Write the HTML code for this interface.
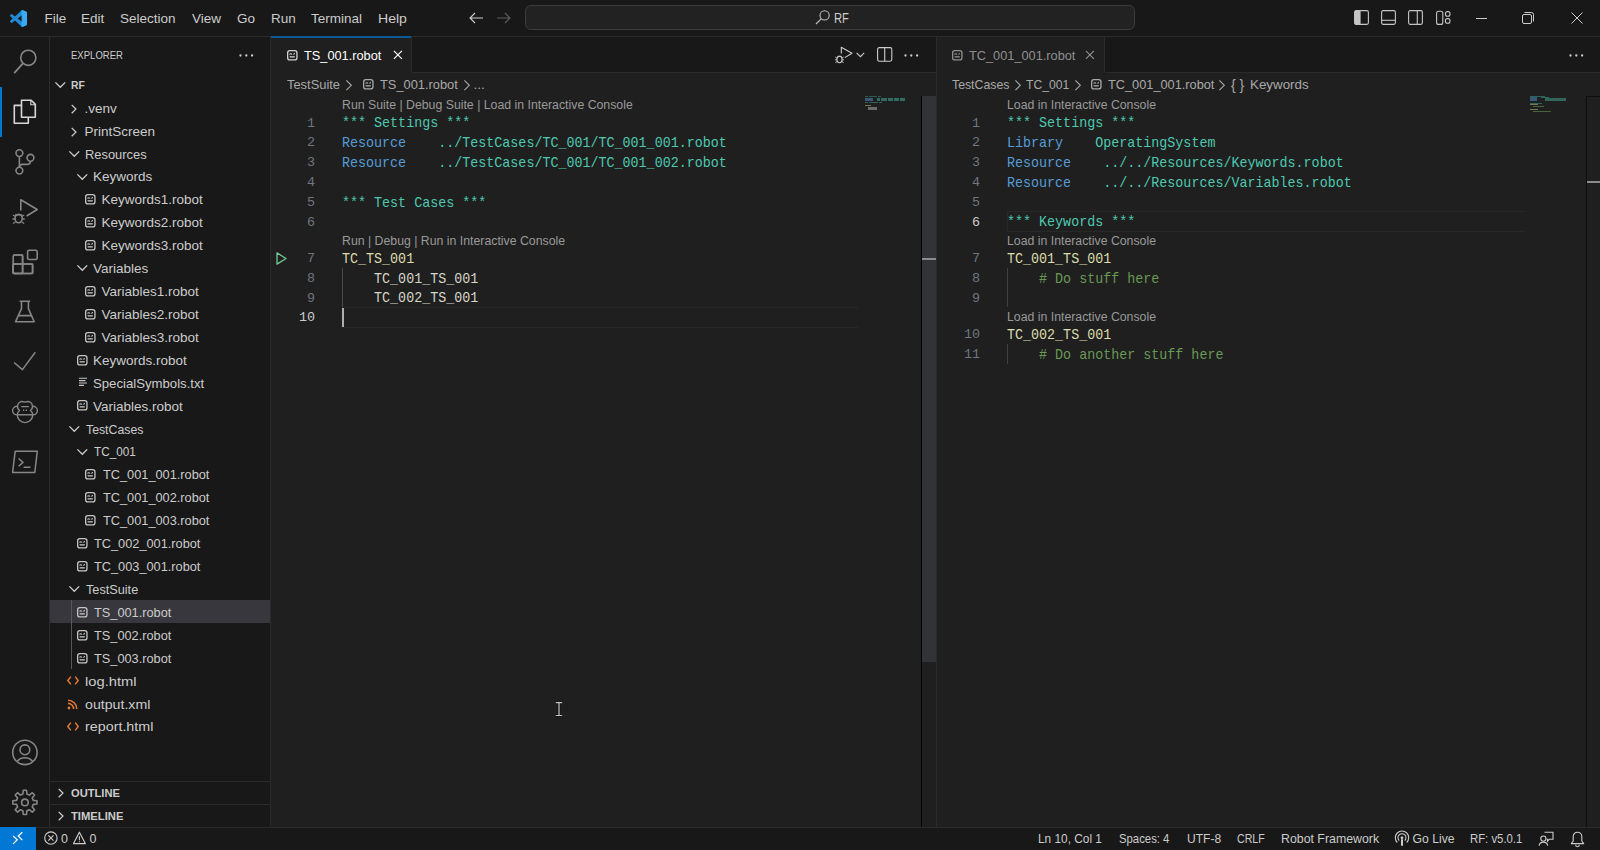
<!DOCTYPE html>
<html><head><meta charset="utf-8">
<style>
*{margin:0;padding:0;box-sizing:border-box}
html,body{width:1600px;height:850px;overflow:hidden;background:#181818}
body{position:relative;font-family:"Liberation Sans",sans-serif;color:#cccccc;font-size:13.5px}
.a{position:absolute}
.t{position:absolute;white-space:pre;line-height:1}
svg{position:absolute;overflow:visible}
.mono{font-family:"Liberation Mono",monospace}
/* rows */
.row{position:absolute;left:50px;width:220px;height:22.917px;line-height:22.917px;white-space:pre;font-size:13.5px;color:#cccccc}
.row span{position:absolute;top:0}
.ln{position:absolute;width:40px;text-align:right;font-family:"Liberation Mono",monospace;font-size:13.37px;color:#6e7681;line-height:19.79px;height:19.79px}
.cl{position:absolute;white-space:pre;font-family:"Liberation Mono",monospace;font-size:14.2px;line-height:19.79px;height:19.79px;color:#cccccc;transform:scaleX(.9415);transform-origin:0 0}
.lens{position:absolute;white-space:pre;font-size:12.5px;color:#999999;line-height:16.67px;height:16.67px}
</style></head>
<body>
<!-- ============ TITLE BAR ============ -->
<div class="a" style="left:0;top:0;width:1600px;height:36px;background:#181818"></div>

<svg style="left:10px;top:10px" width="17" height="17" viewBox="0 0 100 100"><path fill="#2289d6" d="M96.46 10.8L75.86.87a6.23 6.23 0 0 0-7.1 1.2L29.33 38.05 12.15 25a4.16 4.16 0 0 0-5.32.24L1.34 30.23a4.17 4.17 0 0 0 0 6.16L16.24 50 1.33 63.61a4.17 4.17 0 0 0 0 6.16l5.5 4.99a4.16 4.16 0 0 0 5.32.24l17.18-13.04 39.43 35.97a6.23 6.23 0 0 0 7.1 1.2l20.6-9.92A6.25 6.25 0 0 0 100 83.6V16.4a6.25 6.25 0 0 0-3.54-5.63zM75.01 72.7L45.1 50l29.91-22.7z"/><path fill="#3cb2fa" opacity=".85" d="M96.46 10.8L75.86.87a6.23 6.23 0 0 0-7.1 1.2L68 3v94l.76.73a6.23 6.23 0 0 0 7.1 1.2l20.6-9.92A6.25 6.25 0 0 0 100 83.6V16.4a6.25 6.25 0 0 0-3.54-5.63z"/></svg>
<div class="t" style="left:44.5px;top:12px">File</div>
<div class="t" style="left:81px;top:12px">Edit</div>
<div class="t" style="left:120px;top:12px">Selection</div>
<div class="t" style="left:192px;top:12px">View</div>
<div class="t" style="left:237px;top:12px">Go</div>
<div class="t" style="left:271px;top:12px">Run</div>
<div class="t" style="left:311px;top:12px">Terminal</div>
<div class="t" style="left:377.5px;top:12px;transform:scaleX(1.04);transform-origin:0 0">Help</div>
<!-- nav arrows -->
<svg style="left:469px;top:12px" width="14" height="12" viewBox="0 0 14 12"><path d="M6 1L1 6l5 5M1 6h13" fill="none" stroke="#cccccc" stroke-width="1.1"/></svg>
<svg style="left:497px;top:12px" width="14" height="12" viewBox="0 0 14 12"><path d="M8 1l5 5-5 5M0 6h13" fill="none" stroke="#5f5f5f" stroke-width="1.1"/></svg>
<!-- command center -->
<div class="a" style="left:525px;top:5px;width:610px;height:25px;border:1px solid #3c3c3c;border-radius:6px;background:#222222"></div>
<svg style="left:815px;top:10px" width="15" height="15" viewBox="0 0 15 15"><circle cx="9.6" cy="5.4" r="4.6" fill="none" stroke="#bdbdbd" stroke-width="1.1"/><path d="M6.4 8.6L1 14" stroke="#bdbdbd" stroke-width="1.2"/></svg>
<div class="t" style="left:834px;top:11.3px;font-size:14px;color:#cccccc;transform:scaleX(.8);transform-origin:0 0">RF</div>
<!-- layout icons -->
<svg style="left:1354px;top:10px" width="15" height="15" viewBox="0 0 15 15"><rect x=".6" y=".6" width="13.8" height="13.8" rx="1.6" fill="none" stroke="#c5c5c5" stroke-width="1.1"/><rect x=".6" y=".6" width="6" height="13.8" rx="1.2" fill="#c5c5c5"/></svg>
<svg style="left:1381px;top:10px" width="15" height="15" viewBox="0 0 15 15"><rect x=".6" y=".6" width="13.8" height="13.8" rx="1.6" fill="none" stroke="#c5c5c5" stroke-width="1.1"/><path d="M.6 10.3h13.8" stroke="#c5c5c5" stroke-width="1.1"/></svg>
<svg style="left:1408px;top:10px" width="15" height="15" viewBox="0 0 15 15"><rect x=".6" y=".6" width="13.8" height="13.8" rx="1.6" fill="none" stroke="#c5c5c5" stroke-width="1.1"/><path d="M9.3 .6v13.8" stroke="#c5c5c5" stroke-width="1.1"/></svg>
<svg style="left:1436px;top:10px" width="15" height="15" viewBox="0 0 15 15"><rect x=".6" y="1.2" width="6.2" height="13.2" rx="2" fill="none" stroke="#c5c5c5" stroke-width="1.1"/><rect x="9.4" y="1.6" width="4.6" height="4.6" rx="2" fill="none" stroke="#c5c5c5" stroke-width="1.1"/><rect x="9.4" y="8.6" width="4.6" height="4.6" rx="2" fill="none" stroke="#c5c5c5" stroke-width="1.1"/></svg>
<!-- window controls -->
<div class="a" style="left:1476px;top:17.5px;width:11px;height:1px;background:#cccccc"></div>
<svg style="left:1522px;top:12px" width="12" height="12" viewBox="0 0 12 12"><rect x=".5" y="2.5" width="9" height="9" rx="1.5" fill="none" stroke="#cccccc" stroke-width="1"/><path d="M2.5 .5h7a2 2 0 0 1 2 2v7" fill="none" stroke="#cccccc" stroke-width="1"/></svg>
<svg style="left:1571px;top:12px" width="12" height="12" viewBox="0 0 12 12"><path d="M.5 .5l11 11M11.5 .5l-11 11" stroke="#cccccc" stroke-width="1"/></svg>

<!-- ============ ACTIVITY BAR ============ -->
<div class="a" style="left:49px;top:36px;width:1px;height:791px;background:#2b2b2b"></div>
<div class="a" style="left:0;top:86.5px;width:2px;height:50px;background:#0078d4"></div>
<svg style="left:0;top:0" width="50" height="850" viewBox="0 0 50 850">
<g fill="none" stroke="#868686" stroke-width="1.6" stroke-linejoin="round">
<circle cx="28.3" cy="57.8" r="7.6"/><path d="M22.9 63.3L14.2 73.2" stroke-width="1.8"/>
</g>
<g fill="none" stroke="#d7d7d7" stroke-width="1.6" stroke-linejoin="round">
<path d="M21.5 105.4H14.3V123.3H28.3V117.2"/>
<path d="M21.5 100.2H31.2L35.3 104.4V117.2H21.5Z"/><path d="M30.8 100.4V104.8H35.1" stroke-width="1.1"/>
</g>
<g fill="none" stroke="#868686" stroke-width="1.6" stroke-linejoin="round">
<circle cx="19.4" cy="153.1" r="3.4"/><circle cx="19.4" cy="170.6" r="3.4"/><circle cx="30.5" cy="157.8" r="3.4"/>
<path d="M19.4 156.5V167.2"/><path d="M30.5 161.2Q30.5 164.4 26.8 164.4H22.6Q19.4 164.4 19.4 167.2"/>
<path d="M20.8 210.5V199.8L37.2 209.5L26.6 216"/>
<ellipse cx="18.6" cy="218.6" rx="3.6" ry="4.2"/><path d="M13 215l2.5 1.5M24.2 215l-2.5 1.5M12.5 219h2.5M24.7 219h-2.5M13 223.5l2.5-1.5M24.2 223.5l-2.5-1.5M15 214.8h7.2" stroke-width="1.3"/>
<path d="M13.2 264H32.6V273.5H13.2ZM13.2 255H22.6V273.5M22.6 264V273.5" stroke-linejoin="round"/>
<rect x="13.2" y="255" width="9.4" height="18.5" rx="1.6"/><rect x="13.2" y="264" width="19.4" height="9.5" rx="1.6"/>
<rect x="27.6" y="250.3" width="9.6" height="9.2" rx="1.6"/>
<path d="M19.6 301.3H30.2M21.5 301.3V308.6L15.6 321.7H34.2L28.4 308.6V301.3M17.8 315.6H32"/>
<path d="M14.1 362.5L22.4 369.6L35.3 352.2" stroke-width="1.5"/>
<path d="M19.6 410.5C17.7 409.2 17.3 407.5 17.6 405.5C18.1 402.6 20.8 401.1 23 401.7C24.2 402.1 25.8 402.1 27 401.7C29.2 401.1 31.9 402.6 32.4 405.5C32.7 407.5 32.3 409.2 30.4 410.5C32 411.6 32.8 413 32.8 414.8A7.8 7.8 0 0 1 17.2 414.8C17.2 413 18 411.6 19.6 410.5Z" stroke-width="1.4"/><path d="M17.4 406.3A4.8 4.3 0 0 0 17.4 414.9M32.6 406.3A4.8 4.3 0 0 1 32.6 414.9M17.2 414.8H32.8" stroke-width="1.4"/><path d="M21.2 406.6H28.8" stroke-width="1.3"/><path d="M23.6 409.4v1.6M26.4 409.4v1.6" stroke-width="1.3"/>
<path d="M15.2 451.2H37.3L34.8 472.4H12.6Z" stroke-width="1.5"/><path d="M18.6 458.5L23 462.4L18.6 466.3M23.6 467.2H30.5" stroke-width="1.5"/>
<circle cx="24.9" cy="752.4" r="12.2"/><circle cx="24.9" cy="749.8" r="4.9"/><path d="M17.3 761.4A8.6 7 0 0 1 32.5 761.4"/>
<path d="M36.99 800.78 L36.99 804.02 L33.26 804.41 L32.23 806.89 L34.60 809.80 L32.30 812.10 L29.39 809.73 L26.91 810.76 L26.52 814.49 L23.28 814.49 L22.89 810.76 L20.41 809.73 L17.50 812.10 L15.20 809.80 L17.57 806.89 L16.54 804.41 L12.81 804.02 L12.81 800.78 L16.54 800.39 L17.57 797.91 L15.20 795.00 L17.50 792.70 L20.41 795.07 L22.89 794.04 L23.28 790.31 L26.52 790.31 L26.91 794.04 L29.39 795.07 L32.30 792.70 L34.60 795.00 L32.23 797.91 L33.26 800.39Z"/><circle cx="24.9" cy="802.4" r="3.3"/>
</g>
</svg>
<!-- ============ EDITOR 1 ============ -->
<div class="a" style="left:271px;top:36px;width:665px;height:791px;background:#1f1f1f"></div>
<div class="a" style="left:271px;top:36px;width:665px;height:36px;background:#181818"></div>
<div class="a" style="left:412px;top:72px;width:524px;height:1px;background:#2b2b2b"></div>
<div class="a" style="left:271px;top:36px;width:141px;height:37px;background:#1f1f1f"></div>
<div class="a" style="left:411px;top:36px;width:1px;height:36px;background:#2b2b2b"></div>
<div class="a" style="left:271px;top:36px;width:140px;height:2px;background:#0d5b96"></div>
<svg style="left:287.00px;top:49.60px" width="11" height="11" viewBox="0 0 11 11"><rect x=".65" y=".65" width="9.3" height="9.2" rx="2.2" fill="none" stroke="#d0d0d0" stroke-width="1.3"/><path d="M2.6 4.6a1.2 1.2 0 0 1 2.3 0M6.5 4.6l1.2-1.4" fill="none" stroke="#d0d0d0" stroke-width="1.1"/><rect x="2.6" y="6.2" width="5.2" height="1.3" fill="#d0d0d0"/></svg>
<div class="t" style="left:304px;top:48.77px;color:#ffffff;transform:scaleX(0.945);transform-origin:0 0">TS_001.robot</div>
<svg style="left:392.5px;top:50.2px" width="10" height="10" viewBox="0 0 10 10"><path d="M.9 .9l8 8M8.9 .9l-8 8" stroke="#ffffff" stroke-width="1.15"/></svg>
<div class="t" style="left:287px;top:78.2px;color:#a9a9a9;transform:scaleX(.955);transform-origin:0 0">TestSuite</div>
<svg style="left:346.30px;top:79.70px" width="6" height="11" viewBox="0 0 6 11"><path d="M.4 .4L5.3 5.3L.4 10.2" fill="none" stroke="#a9a9a9" stroke-width="1.1"/></svg>
<svg style="left:363.20px;top:79.20px" width="11" height="11" viewBox="0 0 11 11"><rect x=".65" y=".65" width="9.3" height="9.2" rx="2.2" fill="none" stroke="#a9a9a9" stroke-width="1.3"/><path d="M2.6 4.6a1.2 1.2 0 0 1 2.3 0M6.5 4.6l1.2-1.4" fill="none" stroke="#a9a9a9" stroke-width="1.1"/><rect x="2.6" y="6.2" width="5.2" height="1.3" fill="#a9a9a9"/></svg>
<div class="t" style="left:379.5px;top:78.2px;color:#a9a9a9;transform:scaleX(.95);transform-origin:0 0">TS_001.robot</div>
<svg style="left:463.80px;top:79.70px" width="6" height="11" viewBox="0 0 6 11"><path d="M.4 .4L5.3 5.3L.4 10.2" fill="none" stroke="#a9a9a9" stroke-width="1.1"/></svg>
<div class="t" style="left:473.5px;top:78.2px;color:#a9a9a9">...</div>
<div class="a" style="left:936px;top:36px;width:664px;height:791px;background:#1f1f1f"></div>
<div class="a" style="left:936px;top:36px;width:664px;height:36px;background:#181818"></div>
<div class="a" style="left:1105px;top:72px;width:495px;height:1px;background:#2b2b2b"></div>
<div class="a" style="left:936px;top:36px;width:169px;height:37px;background:#1f1f1f"></div>
<div class="a" style="left:1104px;top:36px;width:1px;height:36px;background:#2b2b2b"></div>
<svg style="left:952.00px;top:49.60px" width="11" height="11" viewBox="0 0 11 11"><rect x=".65" y=".65" width="9.3" height="9.2" rx="2.2" fill="none" stroke="#8f8f8f" stroke-width="1.3"/><path d="M2.6 4.6a1.2 1.2 0 0 1 2.3 0M6.5 4.6l1.2-1.4" fill="none" stroke="#8f8f8f" stroke-width="1.1"/><rect x="2.6" y="6.2" width="5.2" height="1.3" fill="#8f8f8f"/></svg>
<div class="t" style="left:968.5px;top:48.77px;color:#8f8f8f;transform:scaleX(.945);transform-origin:0 0">TC_001_001.robot</div>
<svg style="left:1084.5px;top:50.2px" width="10" height="10" viewBox="0 0 10 10"><path d="M.9 .9l8 8M8.9 .9l-8 8" stroke="#8f8f8f" stroke-width="1.15"/></svg>
<div class="t" style="left:951.5px;top:78.2px;color:#a9a9a9;transform:scaleX(.91);transform-origin:0 0">TestCases</div>
<svg style="left:1014.80px;top:79.70px" width="6" height="11" viewBox="0 0 6 11"><path d="M.4 .4L5.3 5.3L.4 10.2" fill="none" stroke="#a9a9a9" stroke-width="1.1"/></svg>
<div class="t" style="left:1026px;top:78.2px;color:#a9a9a9;transform:scaleX(.9);transform-origin:0 0">TC_001</div>
<svg style="left:1074.50px;top:79.70px" width="6" height="11" viewBox="0 0 6 11"><path d="M.4 .4L5.3 5.3L.4 10.2" fill="none" stroke="#a9a9a9" stroke-width="1.1"/></svg>
<svg style="left:1090.80px;top:79.20px" width="11" height="11" viewBox="0 0 11 11"><rect x=".65" y=".65" width="9.3" height="9.2" rx="2.2" fill="none" stroke="#a9a9a9" stroke-width="1.3"/><path d="M2.6 4.6a1.2 1.2 0 0 1 2.3 0M6.5 4.6l1.2-1.4" fill="none" stroke="#a9a9a9" stroke-width="1.1"/><rect x="2.6" y="6.2" width="5.2" height="1.3" fill="#a9a9a9"/></svg>
<div class="t" style="left:1107.5px;top:78.2px;color:#a9a9a9;transform:scaleX(.945);transform-origin:0 0">TC_001_001.robot</div>
<svg style="left:1219.30px;top:79.70px" width="6" height="11" viewBox="0 0 6 11"><path d="M.4 .4L5.3 5.3L.4 10.2" fill="none" stroke="#a9a9a9" stroke-width="1.1"/></svg>
<div class="t" style="left:1231px;top:77.7px;color:#a9a9a9;font-size:14px">{ }</div>
<div class="t" style="left:1249.7px;top:78.2px;color:#a9a9a9;transform:scaleX(.99);transform-origin:0 0">Keywords</div>
<div class="a" style="left:936px;top:36px;width:1px;height:791px;background:#2b2b2b"></div>
<div class="t" style="left:342px;top:99.17px;font-size:12.3px;color:#999999">Run Suite | Debug Suite | Load in Interactive Console</div>
<div class="ln" style="left:275px;top:113.57px;color:#6e7681">1</div>
<div class="cl" style="left:342px;top:114.47px"><span style="color:#4ec9b0">*** Settings ***</span></div>
<div class="ln" style="left:275px;top:133.36px;color:#6e7681">2</div>
<div class="cl" style="left:342px;top:134.26px"><span style="color:#569cd6">Resource</span>    <span style="color:#4ec9b0">../TestCases/TC_001/TC_001_001.robot</span></div>
<div class="ln" style="left:275px;top:153.15px;color:#6e7681">3</div>
<div class="cl" style="left:342px;top:154.05px"><span style="color:#569cd6">Resource</span>    <span style="color:#4ec9b0">../TestCases/TC_001/TC_001_002.robot</span></div>
<div class="ln" style="left:275px;top:172.94px;color:#6e7681">4</div>
<div class="ln" style="left:275px;top:192.73px;color:#6e7681">5</div>
<div class="cl" style="left:342px;top:193.63px"><span style="color:#4ec9b0">*** Test Cases ***</span></div>
<div class="ln" style="left:275px;top:212.53px;color:#6e7681">6</div>
<div class="t" style="left:342px;top:234.59px;font-size:12.3px;color:#999999">Run | Debug | Run in Interactive Console</div>
<div class="ln" style="left:275px;top:248.98px;color:#6e7681">7</div>
<div class="cl" style="left:342px;top:249.88px"><span style="color:#dcdcaa">TC_TS_001</span></div>
<div class="ln" style="left:275px;top:268.78px;color:#6e7681">8</div>
<div class="cl" style="left:342px;top:269.68px">    <span style="color:#d6d6c8">TC_001_TS_001</span></div>
<div class="ln" style="left:275px;top:288.57px;color:#6e7681">9</div>
<div class="cl" style="left:342px;top:289.47px">    <span style="color:#d6d6c8">TC_002_TS_001</span></div>
<div class="ln" style="left:275px;top:308.36px;color:#cccccc">10</div>
<div class="a" style="left:342px;top:306.96px;width:516px;height:20.79px;border:1px solid #282828;border-right:none"></div>
<div class="t" style="left:1007px;top:99.17px;font-size:12.3px;color:#999999">Load in Interactive Console</div>
<div class="ln" style="left:940px;top:113.57px;color:#6e7681">1</div>
<div class="cl" style="left:1007px;top:114.47px"><span style="color:#4ec9b0">*** Settings ***</span></div>
<div class="ln" style="left:940px;top:133.36px;color:#6e7681">2</div>
<div class="cl" style="left:1007px;top:134.26px"><span style="color:#569cd6">Library</span>    <span style="color:#4ec9b0">OperatingSystem</span></div>
<div class="ln" style="left:940px;top:153.15px;color:#6e7681">3</div>
<div class="cl" style="left:1007px;top:154.05px"><span style="color:#569cd6">Resource</span>    <span style="color:#4ec9b0">../../Resources/Keywords.robot</span></div>
<div class="ln" style="left:940px;top:172.94px;color:#6e7681">4</div>
<div class="cl" style="left:1007px;top:173.84px"><span style="color:#569cd6">Resource</span>    <span style="color:#4ec9b0">../../Resources/Variables.robot</span></div>
<div class="ln" style="left:940px;top:192.73px;color:#6e7681">5</div>
<div class="ln" style="left:940px;top:212.53px;color:#cccccc">6</div>
<div class="a" style="left:1007px;top:211.13px;width:518px;height:20.79px;border:1px solid #282828;border-right:none"></div>
<div class="cl" style="left:1007px;top:213.43px"><span style="color:#4ec9b0">*** Keywords ***</span></div>
<div class="t" style="left:1007px;top:234.59px;font-size:12.3px;color:#999999">Load in Interactive Console</div>
<div class="ln" style="left:940px;top:248.98px;color:#6e7681">7</div>
<div class="cl" style="left:1007px;top:249.88px"><span style="color:#dcdcaa">TC_001_TS_001</span></div>
<div class="ln" style="left:940px;top:268.78px;color:#6e7681">8</div>
<div class="cl" style="left:1007px;top:269.68px">    <span style="color:#6a9955"># Do stuff here</span></div>
<div class="ln" style="left:940px;top:288.57px;color:#6e7681">9</div>
<div class="t" style="left:1007px;top:310.63px;font-size:12.3px;color:#999999">Load in Interactive Console</div>
<div class="ln" style="left:940px;top:325.03px;color:#6e7681">10</div>
<div class="cl" style="left:1007px;top:325.93px"><span style="color:#dcdcaa">TC_002_TS_001</span></div>
<div class="ln" style="left:940px;top:344.82px;color:#6e7681">11</div>
<div class="cl" style="left:1007px;top:345.72px">    <span style="color:#6a9955"># Do another stuff here</span></div>

<!-- ============ EDITOR DECOR ============ -->
<svg style="left:275.5px;top:251.5px" width="11" height="13" viewBox="0 0 11 13"><path d="M1 .9L10 6.5 1 12.1Z" fill="none" stroke="#73c991" stroke-width="1.3" stroke-linejoin="round"/></svg>
<div class="a" style="left:342px;top:267.9px;width:1px;height:39.6px;background:#484848"></div>
<div class="a" style="left:342px;top:307.5px;width:2px;height:19px;background:#aeafad"></div>
<div class="a" style="left:1007px;top:267.9px;width:1px;height:39.6px;background:#404040"></div>
<div class="a" style="left:1007px;top:344px;width:1px;height:19.8px;background:#404040"></div>
<!-- scrollbars / rulers -->
<div class="a" style="left:921px;top:96px;width:1px;height:731px;background:#010409"></div>
<div class="a" style="left:922px;top:96px;width:14px;height:566px;background:#323336"></div>
<div class="a" style="left:922px;top:258.3px;width:14px;height:2px;background:#8b8b8b"></div>
<div class="a" style="left:1586px;top:96px;width:14px;height:731px;border-left:1px solid #0b0d10;border-top:1px solid #0b0d10"></div>
<div class="a" style="left:1587px;top:180.8px;width:13px;height:2px;background:#8b8b8b"></div>
<!-- minimaps -->
<svg style="left:860px;top:94px" width="50" height="20" viewBox="860 94 50 20" shape-rendering="crispEdges">
<g fill="#3a8f80" opacity=".55"><rect x="865" y="96" width="3" height="1"/><rect x="869" y="96" width="8" height="1"/><rect x="878" y="96" width="3" height="1"/></g>
<g fill="#4a7fb5" opacity=".6"><rect x="865" y="98" width="8" height="3"/></g>
<g fill="#3fa08e" opacity=".6"><rect x="877" y="98" width="28" height="3"/></g>
<g fill="#1f1f1f"><rect x="880" y="98" width="1" height="3"/><rect x="887" y="98" width="1" height="3"/><rect x="893" y="98" width="1" height="3"/><rect x="899" y="98" width="1" height="3"/></g>
<g fill="#3a8f80" opacity=".6"><rect x="865" y="102" width="3" height="1"/><rect x="869" y="102" width="9" height="1"/><rect x="879" y="102" width="3" height="1"/></g>
<g fill="#b0b080" opacity=".6"><rect x="865" y="105" width="6" height="1"/></g>
<g fill="#a0a0a0" opacity=".6"><rect x="868" y="107" width="9" height="3"/></g>
</svg>
<svg style="left:1525px;top:94px" width="45" height="22" viewBox="1525 94 45 22" shape-rendering="crispEdges">
<g fill="#3a8f80" opacity=".6"><rect x="1530" y="96" width="15" height="1"/></g>
<g fill="#4a7fb5" opacity=".6"><rect x="1530" y="97" width="7" height="4"/></g>
<g fill="#3fa08e" opacity=".55"><rect x="1541" y="97" width="8" height="1"/><rect x="1545" y="98" width="21" height="3"/></g>
<g fill="#3a8f80" opacity=".6"><rect x="1530" y="103" width="12" height="1"/></g>
<g fill="#b0b080" opacity=".6"><rect x="1530" y="104" width="8" height="1"/><rect x="1530" y="109" width="8" height="1"/></g>
<g fill="#6a9955" opacity=".55"><rect x="1533" y="106" width="11" height="1"/><rect x="1533" y="111" width="18" height="1"/></g>
</svg>
<!-- I-beam -->
<svg style="left:554px;top:701px" width="10" height="16" viewBox="0 0 10 16"><path d="M1.8 1.6h2.6M5.6 1.6h2.6M5 2v12.5M1.8 14.5h2.6M5.6 14.5h2.6" stroke="#000" stroke-width="2.6" opacity=".6"/><path d="M1.8 1.6h2.8l.4.4.4-.4h2.8M5 2v12.5M1.8 14.5h2.8l.4-.4.4.4h2.8" fill="none" stroke="#c8c8c8" stroke-width="1.2"/></svg>
<!-- editor actions group 1 -->
<svg style="left:830px;top:44px" width="40" height="22" viewBox="830 44 40 22"><path d="M841.3 53.5V47.3L852 53.2L844.8 57.6" fill="none" stroke="#cccccc" stroke-width="1.1" stroke-linejoin="round"/><ellipse cx="839.5" cy="59.5" rx="2.6" ry="3.2" fill="none" stroke="#cccccc" stroke-width="1.1"/><path d="M835.3 57l1.6 1M843.7 57l-1.6 1M835 59.8h1.9M844 59.8h-1.9M835.4 62.6l1.6-1M843.6 62.6l-1.6-1M837.4 56.3h4.2" stroke="#cccccc" stroke-width=".9"/><path d="M856.6 52.8l3.8 3.8 3.8-3.8" fill="none" stroke="#cccccc" stroke-width="1.1"/></svg>
<svg style="left:877px;top:47px" width="16" height="15" viewBox="0 0 16 15"><rect x=".6" y=".6" width="14.2" height="13.6" rx="1.6" fill="none" stroke="#cccccc" stroke-width="1.1"/><path d="M7.7 .6v13.6" stroke="#cccccc" stroke-width="1.1"/></svg>
<svg style="left:904px;top:53.5px" width="15" height="3" viewBox="0 0 15 3"><circle cx="1.5" cy="1.5" r="1.15" fill="#cccccc"/><circle cx="7.3" cy="1.5" r="1.15" fill="#cccccc"/><circle cx="13.1" cy="1.5" r="1.15" fill="#cccccc"/></svg>
<svg style="left:1569px;top:53.5px" width="15" height="3" viewBox="0 0 15 3"><circle cx="1.5" cy="1.5" r="1.15" fill="#cccccc"/><circle cx="7.3" cy="1.5" r="1.15" fill="#cccccc"/><circle cx="13.1" cy="1.5" r="1.15" fill="#cccccc"/></svg>
<!-- ============ STATUS BAR ============ -->
<div class="a" style="left:0;top:827px;width:1600px;height:23px;background:#181818;border-top:1px solid #2b2b2b"></div>
<div class="a" style="left:0;top:827px;width:36px;height:23px;background:#0078d4"></div>
<svg style="left:0;top:826px" width="36" height="24" viewBox="0 826 36 24"><path d="M22.3 832.2L18.2 836L22.3 840.1M13.1 836L17.3 839.8L13.1 843.9" fill="none" stroke="#ffffff" stroke-width="1.2"/></svg>
<svg style="left:40px;top:826px" width="60" height="24" viewBox="40 826 60 24"><circle cx="50.9" cy="838" r="6.2" fill="none" stroke="#cccccc" stroke-width="1.15"/><path d="M48.3 835.4l5.2 5.2M53.5 835.4l-5.2 5.2" stroke="#cccccc" stroke-width="1.15"/><path d="M79.4 832.2L73.5 843.6H85.3Z" fill="none" stroke="#cccccc" stroke-width="1.15" stroke-linejoin="round"/><path d="M79.4 836.2v4M79.4 841.3v1" stroke="#cccccc" stroke-width="1.1"/></svg>
<div class="t" style="left:61px;top:832.5px;font-size:12.5px">0</div>
<div class="t" style="left:89.5px;top:832.5px;font-size:12.5px">0</div>
<div class="t" style="left:1038px;top:833px;font-size:12.2px;transform:scaleX(.973);transform-origin:0 0">Ln 10, Col 1</div>
<div class="t" style="left:1118.5px;top:833px;font-size:12.2px;transform:scaleX(.93);transform-origin:0 0">Spaces: 4</div>
<div class="t" style="left:1186.5px;top:833px;font-size:12.2px;transform:scaleX(.99);transform-origin:0 0">UTF-8</div>
<div class="t" style="left:1236.5px;top:833px;font-size:12.2px;transform:scaleX(.87);transform-origin:0 0">CRLF</div>
<div class="t" style="left:1280.5px;top:833px;font-size:12.2px;transform:scaleX(1.013);transform-origin:0 0">Robot Framework</div>
<svg style="left:1394px;top:831px" width="16" height="16" viewBox="0 0 16 16"><circle cx="8" cy="6.8" r="1.4" fill="#cccccc"/><path d="M5.2 9.6a4 4 0 1 1 5.6 0M3.3 11.5a6.7 6.7 0 1 1 9.4 0" fill="none" stroke="#cccccc" stroke-width="1.1"/><path d="M8 8.2v6.5" stroke="#cccccc" stroke-width="2"/></svg>
<div class="t" style="left:1412.5px;top:833px;font-size:12.2px;transform:scaleX(1.0);transform-origin:0 0">Go Live</div>
<div class="t" style="left:1470px;top:833px;font-size:12.2px;transform:scaleX(.93);transform-origin:0 0">RF: v5.0.1</div>
<svg style="left:1538px;top:831px" width="16" height="16" viewBox="0 0 16 16"><path d="M6.5 1.2H15V8.2H11.3L9.5 10.2V8.2H8.8" fill="none" stroke="#cccccc" stroke-width="1.1"/><circle cx="5.4" cy="7.6" r="2.6" fill="none" stroke="#cccccc" stroke-width="1.1"/><path d="M1 14.6a4.5 4.4 0 0 1 8.8 0" fill="none" stroke="#cccccc" stroke-width="1.1"/></svg>
<svg style="left:1570px;top:831px" width="15" height="16" viewBox="0 0 15 16"><path d="M7.5 1.2a4.3 4.3 0 0 1 4.3 4.3V10l1.9 2.6H1.3L3.2 10V5.5a4.3 4.3 0 0 1 4.3-4.3Z" fill="none" stroke="#cccccc" stroke-width="1.1" stroke-linejoin="round"/><path d="M5.6 13.8a1.9 1.9 0 0 0 3.8 0" fill="none" stroke="#cccccc" stroke-width="1.1"/></svg>

<!-- ============ SIDEBAR ============ -->
<div class="a" style="left:270px;top:36px;width:1px;height:791px;background:#2b2b2b"></div>
<div class="t" style="left:71px;top:50.3px;font-size:11.5px;transform:scaleX(.83);transform-origin:0 0">EXPLORER</div>
<svg style="left:239px;top:53.5px" width="15" height="3" viewBox="0 0 15 3"><circle cx="1.5" cy="1.5" r="1.15" fill="#cccccc"/><circle cx="7.3" cy="1.5" r="1.15" fill="#cccccc"/><circle cx="13.1" cy="1.5" r="1.15" fill="#cccccc"/></svg>
<svg style="left:55.20px;top:82.20px" width="11" height="6" viewBox="0 0 11 6"><path d="M.4 .4L5.3 5.3L10.2 .4" fill="none" stroke="#cccccc" stroke-width="1.3"/></svg>
<div class="t" style="left:71px;top:80px;font-size:11.5px;font-weight:700;transform:scaleX(.9);transform-origin:0 0">RF</div>
<svg style="left:71.00px;top:104.32px" width="6" height="11" viewBox="0 0 6 11"><path d="M.7 .9L4.9 5.1L.7 9.3" fill="none" stroke="#cccccc" stroke-width="1.3"/></svg>
<div class="t" style="left:84.50px;top:101.72px">.venv</div>
<svg style="left:71.00px;top:127.23px" width="6" height="11" viewBox="0 0 6 11"><path d="M.7 .9L4.9 5.1L.7 9.3" fill="none" stroke="#cccccc" stroke-width="1.3"/></svg>
<div class="t" style="left:84.50px;top:124.63px">PrintScreen</div>
<svg style="left:68.90px;top:150.75px" width="11" height="6" viewBox="0 0 11 6"><path d="M.4 .4L5.3 5.3L10.2 .4" fill="none" stroke="#cccccc" stroke-width="1.3"/></svg>
<div class="t" style="left:84.50px;top:147.55px;transform:scaleX(0.955);transform-origin:0 0">Resources</div>
<svg style="left:77.23px;top:173.67px" width="11" height="6" viewBox="0 0 11 6"><path d="M.4 .4L5.3 5.3L10.2 .4" fill="none" stroke="#cccccc" stroke-width="1.3"/></svg>
<div class="t" style="left:93.00px;top:170.47px">Keywords</div>
<svg style="left:85.20px;top:194.18px" width="11" height="11" viewBox="0 0 11 11"><rect x=".65" y=".65" width="9.3" height="9.2" rx="2.2" fill="none" stroke="#c5c5c5" stroke-width="1.3"/><path d="M2.6 4.6a1.2 1.2 0 0 1 2.3 0M6.5 4.6l1.2-1.4" fill="none" stroke="#c5c5c5" stroke-width="1.1"/><rect x="2.6" y="6.2" width="5.2" height="1.3" fill="#c5c5c5"/></svg>
<div class="t" style="left:101.50px;top:193.38px">Keywords1.robot</div>
<svg style="left:85.20px;top:217.10px" width="11" height="11" viewBox="0 0 11 11"><rect x=".65" y=".65" width="9.3" height="9.2" rx="2.2" fill="none" stroke="#c5c5c5" stroke-width="1.3"/><path d="M2.6 4.6a1.2 1.2 0 0 1 2.3 0M6.5 4.6l1.2-1.4" fill="none" stroke="#c5c5c5" stroke-width="1.1"/><rect x="2.6" y="6.2" width="5.2" height="1.3" fill="#c5c5c5"/></svg>
<div class="t" style="left:101.50px;top:216.30px">Keywords2.robot</div>
<svg style="left:85.20px;top:240.02px" width="11" height="11" viewBox="0 0 11 11"><rect x=".65" y=".65" width="9.3" height="9.2" rx="2.2" fill="none" stroke="#c5c5c5" stroke-width="1.3"/><path d="M2.6 4.6a1.2 1.2 0 0 1 2.3 0M6.5 4.6l1.2-1.4" fill="none" stroke="#c5c5c5" stroke-width="1.1"/><rect x="2.6" y="6.2" width="5.2" height="1.3" fill="#c5c5c5"/></svg>
<div class="t" style="left:101.50px;top:239.22px">Keywords3.robot</div>
<svg style="left:77.23px;top:265.33px" width="11" height="6" viewBox="0 0 11 6"><path d="M.4 .4L5.3 5.3L10.2 .4" fill="none" stroke="#cccccc" stroke-width="1.3"/></svg>
<div class="t" style="left:93.00px;top:262.13px">Variables</div>
<svg style="left:85.20px;top:285.85px" width="11" height="11" viewBox="0 0 11 11"><rect x=".65" y=".65" width="9.3" height="9.2" rx="2.2" fill="none" stroke="#c5c5c5" stroke-width="1.3"/><path d="M2.6 4.6a1.2 1.2 0 0 1 2.3 0M6.5 4.6l1.2-1.4" fill="none" stroke="#c5c5c5" stroke-width="1.1"/><rect x="2.6" y="6.2" width="5.2" height="1.3" fill="#c5c5c5"/></svg>
<div class="t" style="left:101.50px;top:285.05px">Variables1.robot</div>
<svg style="left:85.20px;top:308.77px" width="11" height="11" viewBox="0 0 11 11"><rect x=".65" y=".65" width="9.3" height="9.2" rx="2.2" fill="none" stroke="#c5c5c5" stroke-width="1.3"/><path d="M2.6 4.6a1.2 1.2 0 0 1 2.3 0M6.5 4.6l1.2-1.4" fill="none" stroke="#c5c5c5" stroke-width="1.1"/><rect x="2.6" y="6.2" width="5.2" height="1.3" fill="#c5c5c5"/></svg>
<div class="t" style="left:101.50px;top:307.97px">Variables2.robot</div>
<svg style="left:85.20px;top:331.68px" width="11" height="11" viewBox="0 0 11 11"><rect x=".65" y=".65" width="9.3" height="9.2" rx="2.2" fill="none" stroke="#c5c5c5" stroke-width="1.3"/><path d="M2.6 4.6a1.2 1.2 0 0 1 2.3 0M6.5 4.6l1.2-1.4" fill="none" stroke="#c5c5c5" stroke-width="1.1"/><rect x="2.6" y="6.2" width="5.2" height="1.3" fill="#c5c5c5"/></svg>
<div class="t" style="left:101.50px;top:330.88px">Variables3.robot</div>
<svg style="left:76.70px;top:354.60px" width="11" height="11" viewBox="0 0 11 11"><rect x=".65" y=".65" width="9.3" height="9.2" rx="2.2" fill="none" stroke="#c5c5c5" stroke-width="1.3"/><path d="M2.6 4.6a1.2 1.2 0 0 1 2.3 0M6.5 4.6l1.2-1.4" fill="none" stroke="#c5c5c5" stroke-width="1.1"/><rect x="2.6" y="6.2" width="5.2" height="1.3" fill="#c5c5c5"/></svg>
<div class="t" style="left:93.00px;top:353.80px">Keywords.robot</div>
<svg style="left:77.50px;top:377.42px" width="10" height="10" viewBox="0 0 10 10"><path d="M1 1.2h8M1 3.6h6.5M1 6h8M1 8.4h5" stroke="#c5c5c5" stroke-width="1.15"/></svg>
<div class="t" style="left:93.00px;top:376.72px;transform:scaleX(0.975);transform-origin:0 0">SpecialSymbols.txt</div>
<svg style="left:76.70px;top:400.43px" width="11" height="11" viewBox="0 0 11 11"><rect x=".65" y=".65" width="9.3" height="9.2" rx="2.2" fill="none" stroke="#c5c5c5" stroke-width="1.3"/><path d="M2.6 4.6a1.2 1.2 0 0 1 2.3 0M6.5 4.6l1.2-1.4" fill="none" stroke="#c5c5c5" stroke-width="1.1"/><rect x="2.6" y="6.2" width="5.2" height="1.3" fill="#c5c5c5"/></svg>
<div class="t" style="left:93.00px;top:399.63px">Variables.robot</div>
<svg style="left:68.90px;top:425.75px" width="11" height="6" viewBox="0 0 11 6"><path d="M.4 .4L5.3 5.3L10.2 .4" fill="none" stroke="#cccccc" stroke-width="1.3"/></svg>
<div class="t" style="left:86.00px;top:422.55px;transform:scaleX(0.91);transform-origin:0 0">TestCases</div>
<svg style="left:77.23px;top:448.67px" width="11" height="6" viewBox="0 0 11 6"><path d="M.4 .4L5.3 5.3L10.2 .4" fill="none" stroke="#cccccc" stroke-width="1.3"/></svg>
<div class="t" style="left:94.00px;top:445.47px;transform:scaleX(0.87);transform-origin:0 0">TC_001</div>
<svg style="left:85.20px;top:469.18px" width="11" height="11" viewBox="0 0 11 11"><rect x=".65" y=".65" width="9.3" height="9.2" rx="2.2" fill="none" stroke="#c5c5c5" stroke-width="1.3"/><path d="M2.6 4.6a1.2 1.2 0 0 1 2.3 0M6.5 4.6l1.2-1.4" fill="none" stroke="#c5c5c5" stroke-width="1.1"/><rect x="2.6" y="6.2" width="5.2" height="1.3" fill="#c5c5c5"/></svg>
<div class="t" style="left:102.50px;top:468.38px;transform:scaleX(0.945);transform-origin:0 0">TC_001_001.robot</div>
<svg style="left:85.20px;top:492.10px" width="11" height="11" viewBox="0 0 11 11"><rect x=".65" y=".65" width="9.3" height="9.2" rx="2.2" fill="none" stroke="#c5c5c5" stroke-width="1.3"/><path d="M2.6 4.6a1.2 1.2 0 0 1 2.3 0M6.5 4.6l1.2-1.4" fill="none" stroke="#c5c5c5" stroke-width="1.1"/><rect x="2.6" y="6.2" width="5.2" height="1.3" fill="#c5c5c5"/></svg>
<div class="t" style="left:102.50px;top:491.30px;transform:scaleX(0.945);transform-origin:0 0">TC_001_002.robot</div>
<svg style="left:85.20px;top:515.02px" width="11" height="11" viewBox="0 0 11 11"><rect x=".65" y=".65" width="9.3" height="9.2" rx="2.2" fill="none" stroke="#c5c5c5" stroke-width="1.3"/><path d="M2.6 4.6a1.2 1.2 0 0 1 2.3 0M6.5 4.6l1.2-1.4" fill="none" stroke="#c5c5c5" stroke-width="1.1"/><rect x="2.6" y="6.2" width="5.2" height="1.3" fill="#c5c5c5"/></svg>
<div class="t" style="left:102.50px;top:514.22px;transform:scaleX(0.945);transform-origin:0 0">TC_001_003.robot</div>
<svg style="left:76.70px;top:537.93px" width="11" height="11" viewBox="0 0 11 11"><rect x=".65" y=".65" width="9.3" height="9.2" rx="2.2" fill="none" stroke="#c5c5c5" stroke-width="1.3"/><path d="M2.6 4.6a1.2 1.2 0 0 1 2.3 0M6.5 4.6l1.2-1.4" fill="none" stroke="#c5c5c5" stroke-width="1.1"/><rect x="2.6" y="6.2" width="5.2" height="1.3" fill="#c5c5c5"/></svg>
<div class="t" style="left:94.00px;top:537.13px;transform:scaleX(0.945);transform-origin:0 0">TC_002_001.robot</div>
<svg style="left:76.70px;top:560.85px" width="11" height="11" viewBox="0 0 11 11"><rect x=".65" y=".65" width="9.3" height="9.2" rx="2.2" fill="none" stroke="#c5c5c5" stroke-width="1.3"/><path d="M2.6 4.6a1.2 1.2 0 0 1 2.3 0M6.5 4.6l1.2-1.4" fill="none" stroke="#c5c5c5" stroke-width="1.1"/><rect x="2.6" y="6.2" width="5.2" height="1.3" fill="#c5c5c5"/></svg>
<div class="t" style="left:94.00px;top:560.05px;transform:scaleX(0.945);transform-origin:0 0">TC_003_001.robot</div>
<svg style="left:68.90px;top:586.17px" width="11" height="6" viewBox="0 0 11 6"><path d="M.4 .4L5.3 5.3L10.2 .4" fill="none" stroke="#cccccc" stroke-width="1.3"/></svg>
<div class="t" style="left:86.00px;top:582.97px;transform:scaleX(0.94);transform-origin:0 0">TestSuite</div>
<div class="a" style="left:50px;top:600.084px;width:220px;height:22.917px;background:#37373d"></div>
<svg style="left:76.70px;top:606.68px" width="11" height="11" viewBox="0 0 11 11"><rect x=".65" y=".65" width="9.3" height="9.2" rx="2.2" fill="none" stroke="#c5c5c5" stroke-width="1.3"/><path d="M2.6 4.6a1.2 1.2 0 0 1 2.3 0M6.5 4.6l1.2-1.4" fill="none" stroke="#c5c5c5" stroke-width="1.1"/><rect x="2.6" y="6.2" width="5.2" height="1.3" fill="#c5c5c5"/></svg>
<div class="t" style="left:94.00px;top:605.88px;transform:scaleX(0.945);transform-origin:0 0">TS_001.robot</div>
<svg style="left:76.70px;top:629.60px" width="11" height="11" viewBox="0 0 11 11"><rect x=".65" y=".65" width="9.3" height="9.2" rx="2.2" fill="none" stroke="#c5c5c5" stroke-width="1.3"/><path d="M2.6 4.6a1.2 1.2 0 0 1 2.3 0M6.5 4.6l1.2-1.4" fill="none" stroke="#c5c5c5" stroke-width="1.1"/><rect x="2.6" y="6.2" width="5.2" height="1.3" fill="#c5c5c5"/></svg>
<div class="t" style="left:94.00px;top:628.80px;transform:scaleX(0.945);transform-origin:0 0">TS_002.robot</div>
<svg style="left:76.70px;top:652.52px" width="11" height="11" viewBox="0 0 11 11"><rect x=".65" y=".65" width="9.3" height="9.2" rx="2.2" fill="none" stroke="#c5c5c5" stroke-width="1.3"/><path d="M2.6 4.6a1.2 1.2 0 0 1 2.3 0M6.5 4.6l1.2-1.4" fill="none" stroke="#c5c5c5" stroke-width="1.1"/><rect x="2.6" y="6.2" width="5.2" height="1.3" fill="#c5c5c5"/></svg>
<div class="t" style="left:94.00px;top:651.72px;transform:scaleX(0.945);transform-origin:0 0">TS_003.robot</div>
<svg style="left:67.00px;top:675.83px" width="12" height="9" viewBox="0 0 12 9"><path d="M3.8 .6L.8 4.5l3 3.9M8.2 .6l3 3.9-3 3.9" fill="none" stroke="#e37933" stroke-width="1.5"/></svg>
<div class="t" style="left:85.00px;top:674.63px;transform:scaleX(1.09);transform-origin:0 0">log.html</div>
<svg style="left:67.40px;top:698.55px" width="11" height="11" viewBox="0 0 11 11"><path d="M1 1.2a8.8 8.8 0 0 1 8.8 8.8M1 4.4a5.6 5.6 0 0 1 5.6 5.6" fill="none" stroke="#e37933" stroke-width="1.6"/><circle cx="2" cy="9" r="1.4" fill="#e37933"/></svg>
<div class="t" style="left:85.10px;top:697.55px;transform:scaleX(1.05);transform-origin:0 0">output.xml</div>
<svg style="left:67.00px;top:721.67px" width="12" height="9" viewBox="0 0 12 9"><path d="M3.8 .6L.8 4.5l3 3.9M8.2 .6l3 3.9-3 3.9" fill="none" stroke="#e37933" stroke-width="1.5"/></svg>
<div class="t" style="left:85.00px;top:720.47px;transform:scaleX(1.06);transform-origin:0 0">report.html</div>
<div class="a" style="left:71px;top:600.08px;width:1px;height:68.75px;background:#585858"></div>
<div class="a" style="left:50px;top:781px;width:220px;height:1px;background:#2b2b2b"></div>
<div class="a" style="left:50px;top:804px;width:220px;height:1px;background:#2b2b2b"></div>
<svg style="left:57.50px;top:787.50px" width="6" height="11" viewBox="0 0 6 11"><path d="M.7 .9L4.9 5.1L.7 9.3" fill="none" stroke="#cccccc" stroke-width="1.3"/></svg>
<div class="t" style="left:70.5px;top:788px;font-size:11.5px;font-weight:700;transform:scaleX(.97);transform-origin:0 0">OUTLINE</div>
<svg style="left:57.50px;top:810.50px" width="6" height="11" viewBox="0 0 6 11"><path d="M.7 .9L4.9 5.1L.7 9.3" fill="none" stroke="#cccccc" stroke-width="1.3"/></svg>
<div class="t" style="left:70.5px;top:811px;font-size:11.5px;font-weight:700;transform:scaleX(.977);transform-origin:0 0">TIMELINE</div>
<div class="a" style="left:0;top:36px;width:1600px;height:1px;background:#2b2b2b"></div>
<div class="a" style="left:271px;top:36px;width:140px;height:2px;background:#0d5b96"></div>
</body></html>
